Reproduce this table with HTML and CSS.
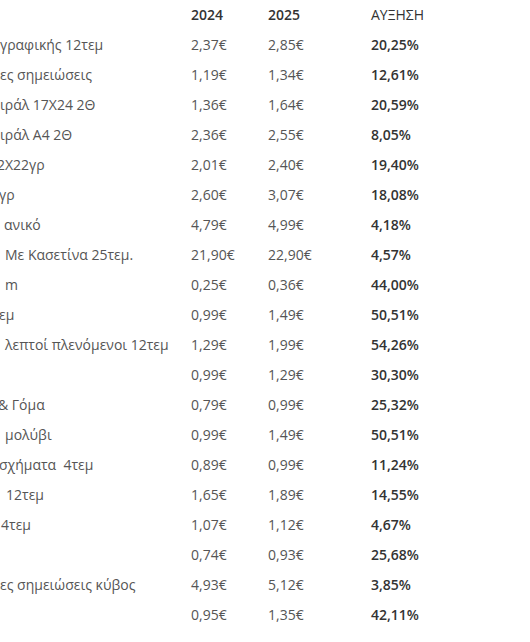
FILE: index.html
```html
<!DOCTYPE html>
<html lang="el">
<head>
<meta charset="utf-8">
<title>Τιμές</title>
<link rel="stylesheet" href="styles.css">
</head>
<body>
<table class="prices">
  <colgroup>
    <col class="c-name"><col class="c-y1"><col class="c-y2"><col class="c-inc">
  </colgroup>
  <thead>
    <tr><th class="name"></th><th>2024</th><th>2025</th><th class="inc-h">ΑΥΞΗΣΗ</th></tr>
  </thead>
  <tbody>
    <tr><td class="name"><span>γραφικής 12τεμ</span></td><td>2,37€</td><td>2,85€</td><td class="inc">20,25%</td></tr>
    <tr><td class="name"><span>ες σημειώσεις</span></td><td>1,19€</td><td>1,34€</td><td class="inc">12,61%</td></tr>
    <tr><td class="name"><span>ιράλ 17Χ24 2Θ</span></td><td>1,36€</td><td>1,64€</td><td class="inc">20,59%</td></tr>
    <tr><td class="name"><span>ιράλ Α4 2Θ</span></td><td>2,36€</td><td>2,55€</td><td class="inc">8,05%</td></tr>
    <tr><td class="name"><span class="out3">2Χ22γρ</span></td><td>2,01€</td><td>2,40€</td><td class="inc">19,40%</td></tr>
    <tr><td class="name"><span class="out1">γρ</span></td><td>2,60€</td><td>3,07€</td><td class="inc">18,08%</td></tr>
    <tr><td class="name"><span class="in4">ανικό</span></td><td>4,79€</td><td>4,99€</td><td class="inc">4,18%</td></tr>
    <tr><td class="name"><span class="in5">Με Κασετίνα 25τεμ.</span></td><td>21,90€</td><td>22,90€</td><td class="inc">4,57%</td></tr>
    <tr><td class="name"><span class="in5">m</span></td><td>0,25€</td><td>0,36€</td><td class="inc">44,00%</td></tr>
    <tr><td class="name"><span class="out1">εμ</span></td><td>0,99€</td><td>1,49€</td><td class="inc">50,51%</td></tr>
    <tr><td class="name"><span class="in5">λεπτοί πλενόμενοι 12τεμ</span></td><td>1,29€</td><td>1,99€</td><td class="inc">54,26%</td></tr>
    <tr><td class="name"></td><td>0,99€</td><td>1,29€</td><td class="inc">30,30%</td></tr>
    <tr><td class="name"><span class="out2">&amp; Γόμα</span></td><td>0,79€</td><td>0,99€</td><td class="inc">25,32%</td></tr>
    <tr><td class="name"><span class="in5">μολύβι</span></td><td>0,99€</td><td>1,49€</td><td class="inc">50,51%</td></tr>
    <tr><td class="name"><span class="out1 pre">σχήματα  4τεμ</span></td><td>0,89€</td><td>0,99€</td><td class="inc">11,24%</td></tr>
    <tr><td class="name"><span class="in6">12τεμ</span></td><td>1,65€</td><td>1,89€</td><td class="inc">14,55%</td></tr>
    <tr><td class="name"><span class="in1">4τεμ</span></td><td>1,07€</td><td>1,12€</td><td class="inc">4,67%</td></tr>
    <tr><td class="name"></td><td>0,74€</td><td>0,93€</td><td class="inc">25,68%</td></tr>
    <tr><td class="name"><span>ες σημειώσεις κύβος</span></td><td>4,93€</td><td>5,12€</td><td class="inc">3,85%</td></tr>
    <tr><td class="name"></td><td>0,95€</td><td>1,35€</td><td class="inc">42,11%</td></tr>
  </tbody>
</table>
</body>
</html>
```

FILE: styles.css
```css
html, body {
  margin: 0;
  padding: 0;
  background: #ffffff;
}

body {
  font-family: "Open Sans", "Liberation Sans", sans-serif;
  font-size: 14px;
  color: #555555;
}

.prices {
  border-collapse: collapse;
  table-layout: fixed;
  width: 530px;
}

.c-name { width: 191px; }
.c-y1 { width: 77px; }
.c-y2 { width: 103px; }
.c-inc { width: 159px; }

.prices th,
.prices td {
  height: 30px;
  padding: 0;
  line-height: 30px;
  text-align: left;
  vertical-align: middle;
  white-space: nowrap;
}

.prices th {
  font-weight: 600;
  color: #333333;
}

.prices th.inc-h {
  font-weight: 400;
  color: #333333;
}

.prices td.inc {
  font-weight: 600;
  color: #333333;
}

.prices .name {
  overflow: hidden;
}

.name span {
  display: inline-block;
}

.pre { white-space: pre; }

.in1 { margin-left: 1px; }
.in4 { margin-left: 4px; }
.in5 { margin-left: 5px; }
.in6 { margin-left: 6px; }
.out1 { margin-left: -1px; }
.out2 { margin-left: -2px; }
.out3 { margin-left: -3px; }
```
